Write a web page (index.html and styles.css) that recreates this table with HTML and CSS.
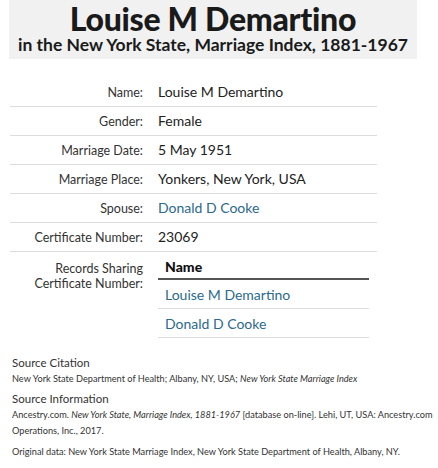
FILE: index.html
```html
<!DOCTYPE html>
<html>
<head>
<meta charset="utf-8">
<link rel="stylesheet" href="styles.css">
</head>
<body>
<div class="page">
  <header class="head">
    <h1 class="title">Louise M Demartino</h1>
    <div class="subtitle">in the New York State, Marriage Index, 1881-1967</div>
  </header>
  <table class="rec">
    <tr><th>Name:</th><td>Louise M Demartino</td></tr>
    <tr><th>Gender:</th><td>Female</td></tr>
    <tr><th>Marriage Date:</th><td>5 May 1951</td></tr>
    <tr><th>Marriage Place:</th><td>Yonkers, New York, USA</td></tr>
    <tr><th>Spouse:</th><td><span class="link">Donald D Cooke</span></td></tr>
    <tr><th>Certificate Number:</th><td>23069</td></tr>
    <tr class="last"><th>Records Sharing Certificate Number:</th>
      <td class="subcell">
        <table class="sub">
          <tr><th>Name</th></tr>
          <tr><td><span class="link">Louise M Demartino</span></td></tr>
          <tr><td><span class="link">Donald D Cooke</span></td></tr>
        </table>
      </td>
    </tr>
  </table>
  <div class="source">
    <div class="src-h">Source Citation</div>
    <p>New York State Department of Health; Albany, NY, USA; <i>New York State Marriage Index</i></p>
    <div class="src-h">Source Information</div>
    <p>Ancestry.com. <i>New York State, Marriage Index, 1881-1967</i> [database on-line]. Lehi, UT, USA: Ancestry.com Operations, Inc., 2017.</p>
    <p>Original data: New York State Marriage Index, New York State Department of Health, Albany, NY.</p>
  </div>
</div>
</body>
</html>
```

FILE: styles.css
```css
html, body { margin: 0; padding: 0; background: #fff; }
body { font-family: "Lato", "Liberation Sans", sans-serif; color: #333; }
.page { padding: 0 0 0 9px; width: 425px; }
.head { background: #f1f1f1; text-align: center; padding: 2px 0 5px; width: 408px; }
.title { margin: 0; font-size: 32px; line-height: 33px; font-weight: 900; color: #1a1a1a; letter-spacing: -0.3px; }
.subtitle { font-size: 17.5px; line-height: 19px; font-weight: 700; color: #1a1a1a; }
.rec { border-collapse: collapse; margin: 19px 0 0 1px; width: 367px; }
.rec > tbody > tr > th, .rec > tbody > tr > td { border-bottom: 1px solid #ddd; padding: 5px 0 6px; vertical-align: top; height: 17px; }
.rec > tbody > tr > th { font-size: 12.5px; font-weight: 400; text-align: right; width: 133px; padding-right: 15px; line-height: 17px; padding-top: 6px; padding-bottom: 5px; color: #333; }
.rec > tbody > tr > td { font-size: 14px; line-height: 17px; color: #222; }
.rec > tbody > tr.last > th, .rec > tbody > tr.last > td { border-bottom: none; }
.rec > tbody > tr.last > th { padding-top: 9px; line-height: 15px; }
.subcell { padding: 5px 8px 0 0 !important; }
.sub { border-collapse: collapse; width: 211px; }
.sub th { text-align: left; font-size: 14px; line-height: 17px; font-weight: 900; color: #111; border-bottom: 2px solid #555; padding: 1px 0 3px 7px; }
.sub td { border-bottom: 1px solid #ddd; padding: 6px 0 5px 7px; font-size: 14px; line-height: 17px; }
.link { color: #2b6a8c; }
.source { margin-top: 18px; padding-left: 3px; }
.src-h { font-size: 11.5px; color: #333; line-height: 14px; }
.source p { margin: 1px 0 5px; font-size: 9.2px; line-height: 16px; color: #333; }
```
